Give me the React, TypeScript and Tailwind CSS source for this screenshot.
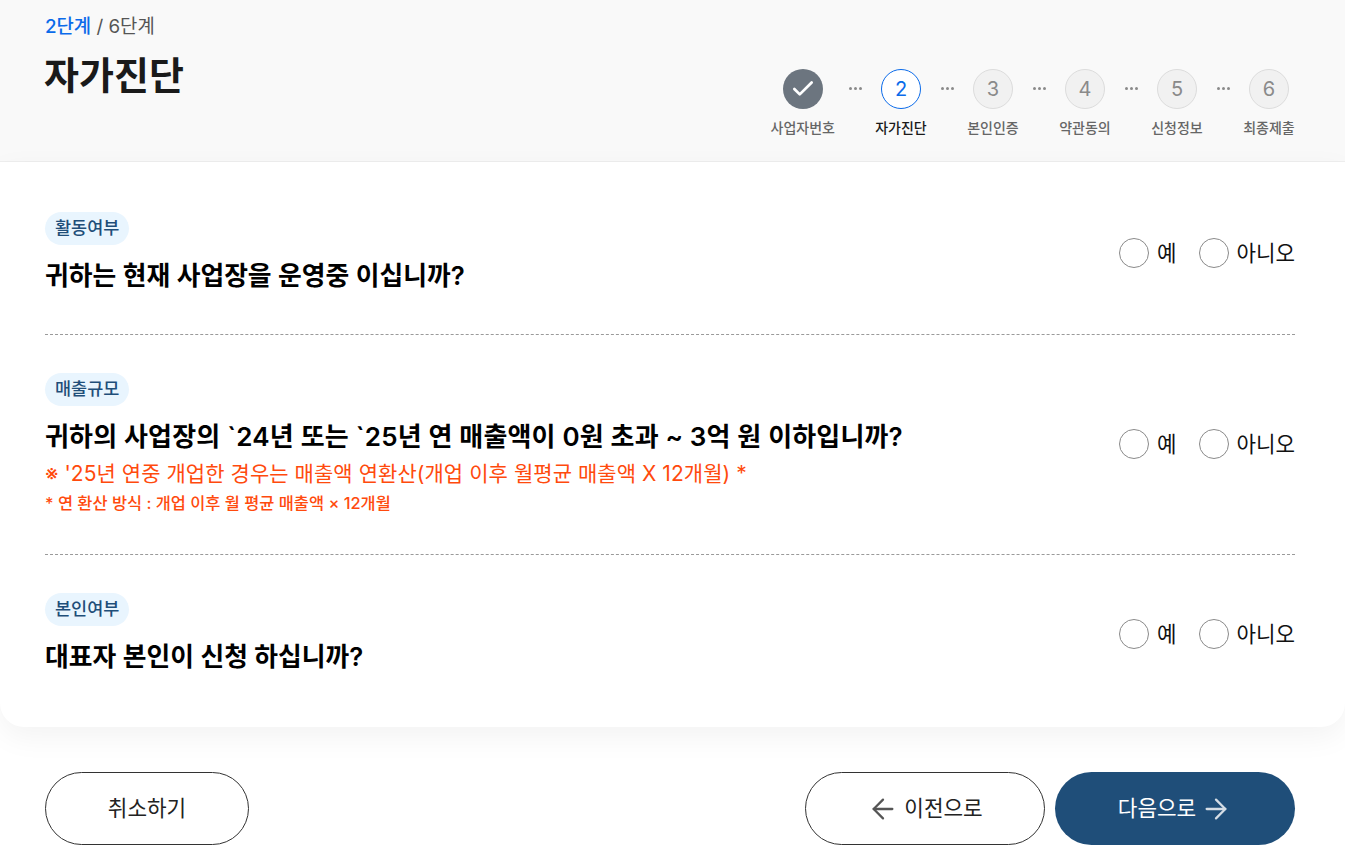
import { ArrowLeft, ArrowRight, Check } from 'lucide-react';

const FONT = "font-['Inter','Noto_Sans_CJK_KR',sans-serif]";

const steps = [
    { no: 1, label: '사업자번호', state: 'done' },
    { no: 2, label: '자가진단', state: 'current' },
    { no: 3, label: '본인인증', state: 'todo' },
    { no: 4, label: '약관동의', state: 'todo' },
    { no: 5, label: '신청정보', state: 'todo' },
    { no: 6, label: '최종제출', state: 'todo' },
];

function Stepper() {
    return (
        <div className="flex items-start">
            {steps.map((step, i) => (
                <div key={step.no} className="flex items-start">
                    {i > 0 && (
                        <div className="flex h-10 w-10 items-center justify-center gap-[2px] pb-[1px]">
                            <span className="h-[3px] w-[3px] rounded-full bg-[#8a8a8a]"></span>
                            <span className="h-[3px] w-[3px] rounded-full bg-[#8a8a8a]"></span>
                            <span className="h-[3px] w-[3px] rounded-full bg-[#8a8a8a]"></span>
                        </div>
                    )}
                    <div className="flex min-w-[52px] flex-col items-center">
                        {step.state === 'done' && (
                            <div className="flex h-10 w-10 items-center justify-center rounded-full bg-[#6c757f]">
                                <Check size={26} strokeWidth={2.5} className="text-white" />
                            </div>
                        )}
                        {step.state === 'current' && (
                            <div className="flex h-10 w-10 items-center justify-center rounded-full border border-[#0b6bea] bg-white text-xl text-[#0b6bea]">
                                {step.no}
                            </div>
                        )}
                        {step.state === 'todo' && (
                            <div className="flex h-10 w-10 items-center justify-center rounded-full border border-[#dcdcdc] bg-[#f1f1f1] text-xl text-[#8a8a8a]">
                                {step.no}
                            </div>
                        )}
                        <span className={`mt-[10px] text-[14px] leading-[18px] font-medium whitespace-nowrap ${step.state === 'current' ? 'font-bold text-[#1a1a1a]' : 'text-[#666666]'}`}>
                            {step.label}
                        </span>
                    </div>
                </div>
            ))}
        </div>
    );
}

function YesNo() {
    return (
        <div className="mb-[1px] flex items-center gap-[22px] text-[21.2px] leading-[30px] text-[#111111]">
            <div className="flex items-center gap-2">
                <span className="h-[30px] w-[30px] rounded-full border border-[#8a8a8a] bg-white"></span>
                <span>예</span>
            </div>
            <div className="flex items-center gap-2">
                <span className="h-[30px] w-[30px] rounded-full border border-[#8a8a8a] bg-white"></span>
                <span>아니오</span>
            </div>
        </div>
    );
}

function Chip({ children }: { children: string }) {
    return (
        <span className="inline-flex h-[33px] items-center rounded-full bg-[#e9f5fe] px-[10px] text-[17.5px] font-medium text-[#1f4e79]">
            {children}
        </span>
    );
}

export default function App() {
    return (
        <div className={`min-h-[856px] w-full overflow-hidden bg-white ${FONT}`}>
            <header className="h-[162px] border-b border-[#eeeeee] bg-[#f9f9f9] pr-[50px] pl-[45px]">
                <div className="flex justify-between">
                    <div>
                        <p className="pt-[14px] text-[18.8px] leading-[26px] text-[#555555]">
                            <span className="font-medium text-[#0b6bea]">2단계</span> / 6단계
                        </p>
                        <h1 className="mt-[8px] -ml-px text-[38px] leading-[54px] font-semibold text-[#1a1a1a]">자가진단</h1>
                    </div>
                    <div className="pt-[69px]">
                        <Stepper />
                    </div>
                </div>
            </header>

            <main className="rounded-b-3xl bg-white pt-[50px] pr-[50px] pb-[51px] pl-[45px] shadow-[0_10px_30px_rgba(0,0,0,0.05)]">
                <section className="flex items-center justify-between border-b border-dashed border-[#9a9a9a] pb-[39px]">
                    <div className="flex min-h-[83px] flex-col items-start">
                        <Chip>활동여부</Chip>
                        <h2 className="mt-[12px] text-[25.8px] leading-[38px] font-semibold text-black">귀하는 현재 사업장을 운영중 이십니까?</h2>
                    </div>
                    <YesNo />
                </section>

                <section className="flex items-center justify-between border-b border-dashed border-[#9a9a9a] py-[38px]">
                    <div className="flex flex-col items-start">
                        <Chip>매출규모</Chip>
                        <h2 className="mt-[12px] text-[26px] leading-[38px] font-semibold tracking-[0.17px] text-black">귀하의 사업장의 `24년 또는 `25년 연 매출액이 0원 초과 ~ 3억 원 이하입니까?</h2>
                        <p className="mt-[2px] text-[21px] leading-[32px] font-normal tracking-[0.05px] text-[#ff4a0d]">※ '25년 연중 개업한 경우는 매출액 연환산(개업 이후 월평균 매출액 X 12개월) *</p>
                        <p className="-mb-px text-[16.4px] leading-[27px] font-medium text-[#ff4a0d]">* 연 환산 방식 : 개업 이후 월 평균 매출액 × 12개월</p>
                    </div>
                    <YesNo />
                </section>

                <section className="flex items-center justify-between pt-[38px]">
                    <div className="flex min-h-[83px] flex-col items-start">
                        <Chip>본인여부</Chip>
                        <h2 className="mt-[12px] text-[25.8px] leading-[38px] font-semibold text-black">대표자 본인이 신청 하십니까?</h2>
                    </div>
                    <YesNo />
                </section>
            </main>

            <footer className="mt-[45px] flex justify-between pr-[50px] pl-[45px] text-[21.3px]">
                <button className="flex h-[73px] w-[204px] items-center justify-center rounded-full border border-[#333333] bg-white text-[#222222]">
                    취소하기
                </button>
                <div className="flex gap-[10px]">
                    <button className="flex h-[73px] w-[240px] items-center justify-center gap-[5px] rounded-full border border-[#333333] bg-white text-[#222222]">
                        <ArrowLeft size={32} strokeWidth={1.7} className="text-[#555555]" />
                        이전으로
                    </button>
                    <button className="flex h-[73px] w-[240px] items-center justify-center gap-[4px] rounded-full bg-[#1f4e79] text-white">
                        다음으로
                        <ArrowRight size={32} strokeWidth={1.7} className="text-[#d5dde5]" />
                    </button>
                </div>
            </footer>
        </div>
    );
}
